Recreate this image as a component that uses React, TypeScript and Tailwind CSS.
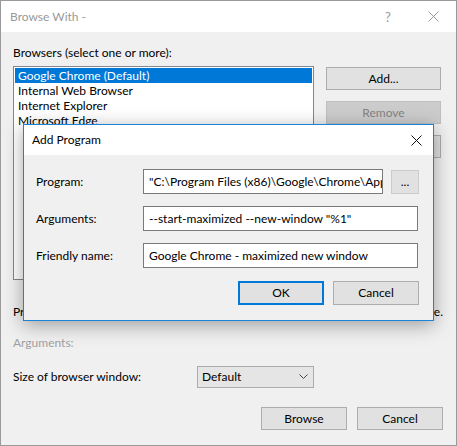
import React from "react";

const font = { fontFamily: 'Lato, "Noto Sans", sans-serif' };

function Btn({
  children,
  className = "",
  disabled = false,
  focused = false,
}: {
  children: React.ReactNode;
  className?: string;
  disabled?: boolean;
  focused?: boolean;
}) {
  const look = disabled
    ? "border border-[#bfbfbf] bg-[#cccccc] text-[#838383]"
    : focused
      ? "border-2 border-[#0078d7] bg-[#e1e1e1] text-black"
      : "border border-[#adadad] bg-[#e1e1e1] text-black";
  return <div className={"flex items-center justify-center " + look + " " + className}>{children}</div>;
}

function CloseX({ color }: { color: string }) {
  return (
    <svg width="11" height="11" viewBox="0 0 11 11">
      <path d="M0.5 0.5 L10.5 10.5 M10.5 0.5 L0.5 10.5" stroke={color} strokeWidth="1" />
    </svg>
  );
}

function TextBox({ value, className = "" }: { value: string; className?: string }) {
  return (
    <div
      className={
        "h-[25px] border border-[#7a7a7a] bg-white pl-[5px] flex items-center overflow-hidden whitespace-nowrap " +
        className
      }
    >
      {value}
    </div>
  );
}

export default function App() {
  const browsers = [
    "Google Chrome (Default)",
    "Internal Web Browser",
    "Internet Explorer",
    "Microsoft Edge",
  ];

  return (
    <div
      className="relative w-[457px] h-[446px] border border-[#9a9a9a] bg-[#f0f0f0] text-[12px] leading-[16px] text-black flex flex-col overflow-hidden"
      style={font}
    >
      {/* Title bar */}
      <div className="h-[31px] bg-white flex items-center pl-[9px] text-[#999999]">
        <span className="flex-1">Browse With -</span>
        <span className="w-[20px] text-center text-[13px] mr-[30px]">?</span>
        <span className="mr-[17px] flex">
          <CloseX color="#999999" />
        </span>
      </div>

      {/* Body */}
      <div className="flex flex-col pl-[12px] pr-[13px] pt-[13px]">
        <div>Browsers (select one or more):</div>

        <div className="flex mt-[5px]">
          <div className="w-[301px] h-[214px] border border-[#828790] bg-white p-[1px]">
            {browsers.map((b, i) => (
              <div
                key={b}
                className={
                  "h-[15px] leading-[15px] pl-[3px] " + (i === 0 ? "bg-[#0078d7] text-white" : "")
                }
              >
                {b}
              </div>
            ))}
          </div>

          <div className="flex flex-col gap-[11px] ml-[12px] mt-[1px]">
            <Btn className="w-[115px] h-[23px]">Add...</Btn>
            <Btn className="w-[115px] h-[23px]" disabled>
              Remove
            </Btn>
            <Btn className="w-[115px] h-[23px]">Edit...</Btn>
          </div>
        </div>

        <div className="mt-[24px] flex justify-between whitespace-nowrap overflow-hidden">
          <span>Program:</span>
          <span>Select a browser to see its command line.</span>
        </div>

        <div className="mt-[15px] text-[#a0a0a0]">Arguments:</div>

        <div className="mt-[15px] flex items-center">
          <div className="w-[184px]">Size of browser window:</div>
          <div className="w-[117px] h-[22px] border border-[#acacac] bg-[#e5e5e5] flex items-center pl-[4px] pr-[5px]">
            <span className="flex-1">Default</span>
            <svg width="9" height="6" viewBox="0 0 9 6">
              <path d="M0.5 0.5 L4.5 4.5 L8.5 0.5" stroke="#444" strokeWidth="1" fill="none" />
            </svg>
          </div>
        </div>

        <div className="mt-[19px] flex justify-end gap-[10px]">
          <Btn className="w-[86px] h-[23px]">Browse</Btn>
          <Btn className="w-[86px] h-[23px]">Cancel</Btn>
        </div>
      </div>

      {/* Add Program dialog */}
      <div className="absolute left-[22px] top-[123px] w-[411px] h-[197px] border border-[#1883d7] bg-[#f0f0f0] shadow-[0_4px_18px_rgba(0,0,0,0.35)] flex flex-col">
        <div className="h-[30px] bg-white flex items-center pl-[8px]">
          <span className="flex-1">Add Program</span>
          <span className="mr-[11px] flex">
            <CloseX color="#111111" />
          </span>
        </div>

        <div className="flex flex-col pl-[12px] pt-[14px] gap-[12px]">
          <div className="flex items-center">
            <div className="w-[107px]">Program:</div>
            <TextBox className="w-[240px]" value={'"C:\\Program Files (x86)\\Google\\Chrome\\Application\\chrome.exe"'} />
            <div className="ml-[8px] w-[28px] h-[24px] border border-[#cccccc] bg-[#e1e1e1] flex items-center justify-center">
              ...
            </div>
          </div>
          <div className="flex items-center">
            <div className="w-[107px]">Arguments:</div>
            <TextBox className="w-[275px]" value={'--start-maximized --new-window "%1"'} />
          </div>
          <div className="flex items-center">
            <div className="w-[107px]">Friendly name:</div>
            <TextBox className="w-[275px]" value="Google Chrome - maximized new window" />
          </div>
        </div>

        <div className="flex justify-end gap-[9px] pr-[14px] mt-[13px]">
          <Btn className="w-[86px] h-[24px]" focused>
            OK
          </Btn>
          <Btn className="w-[86px] h-[24px]">Cancel</Btn>
        </div>
      </div>
    </div>
  );
}
